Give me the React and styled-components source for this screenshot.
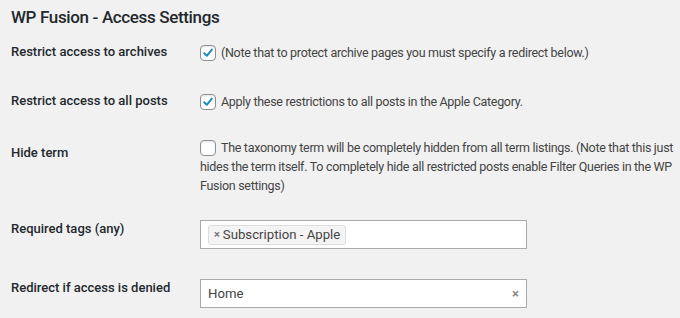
import React from "react";
import styled, { createGlobalStyle } from "styled-components";

const GlobalStyle = createGlobalStyle`
  body {
    margin: 0;
    background: #f1f1f1;
    font-family: Roboto, "Liberation Sans", Arial, sans-serif;
    color: #23282d;
  }
`;

const Page = styled.div`
  width: 680px;
  height: 318px;
  overflow: hidden;
  padding-left: 11px;
  box-sizing: border-box;
`;

const Title = styled.h2`
  margin: 0;
  height: 30px;
  padding-top: 7px;
  box-sizing: border-box;
  font-size: 17px;
  line-height: 20px;
  font-weight: 500;
  letter-spacing: -0.35px;
  color: #23282d;
`;

const Row = styled.div`
  display: grid;
  grid-template-columns: 189px 1fr;
  align-items: start;
  padding-top: ${(p) => p.$top}px;
  height: ${(p) => p.$h}px;
  box-sizing: border-box;
`;

const Label = styled.div`
  font-size: 13px;
  line-height: 18px;
  font-weight: 500;
  color: #23282d;
  margin-top: ${(p) => p.$offset || 0}px;
`;

const CheckLine = styled.label`
  display: block;
  padding-right: 6px;
  font-size: 12.5px;
  letter-spacing: -0.3px;
  line-height: 19px;
  color: #444;
`;

const Box = styled.span`
  display: inline-block;
  vertical-align: -4px;
  width: 16px;
  height: 16px;
  box-sizing: border-box;
  margin-right: 5px;
  border: 1px solid #8c8f94;
  border-radius: 4px;
  background: #fff;
  box-shadow: inset 0 1px 2px rgba(0, 0, 0, 0.1);
  position: relative;

  svg {
    position: absolute;
    left: 1px;
    top: 1px;
  }
`;

const Field = styled.div`
  width: 327px;
  height: 29px;
  box-sizing: border-box;
  border: 1px solid #aaa;
  background: #fff;
  display: flex;
  align-items: center;
  padding: 0 7px;
  font-size: 13.2px;
  color: #444;
`;

const Chip = styled.span`
  display: inline-flex;
  align-items: center;
  height: 20px;
  box-sizing: border-box;
  padding: 0 5px;
  background: #f4f4f4;
  border: 1px solid #ddd;
  border-radius: 3px;
  font-size: 13.2px;
  color: #444;
`;

const Remove = styled.span`
  font-size: 11px;
  color: #777;
  margin-right: 3px;
  font-weight: 700;
`;

const Value = styled.span`
  flex: 1;
`;

const Clear = styled.span`
  font-size: 13px;
  font-weight: 700;
  color: #888;
`;

function Checkbox({ checked, children }) {
  return (
    <CheckLine>
      <Box>
        {checked && (
          <svg width="12" height="12" viewBox="0 0 12 12">
            <path
              d="M2.2 6.2 L4.8 8.8 L9.8 2.6"
              fill="none"
              stroke="#1e8cbe"
              strokeWidth="2"
              strokeLinecap="round"
              strokeLinejoin="round"
            />
          </svg>
        )}
      </Box>
      {children}
    </CheckLine>
  );
}

export default function App() {
  return (
    <Page>
      <GlobalStyle />
      <Title>WP Fusion - Access Settings</Title>
      <Row $top={13} $h={49}>
        <Label>Restrict access to archives</Label>
        <Checkbox checked>
          (Note that to protect archive pages you must specify a redirect below.)
        </Checkbox>
      </Row>
      <Row $top={13} $h={49}>
        <Label>Restrict access to all posts</Label>
        <Checkbox checked>
          Apply these restrictions to all posts in the Apple Category.
        </Checkbox>
      </Row>
      <Row $top={10} $h={77}>
        <Label $offset={6}>Hide term</Label>
        <Checkbox>
          The taxonomy term will be completely hidden from all term listings.
          (Note that this just hides the term itself. To completely hide all
          restricted posts enable Filter Queries in the WP Fusion settings)
        </Checkbox>
      </Row>
      <Row $top={15} $h={59}>
        <Label>Required tags (any)</Label>
        <Field>
          <Chip>
            <Remove>×</Remove>Subscription - Apple
          </Chip>
        </Field>
      </Row>
      <Row $top={15} $h={54}>
        <Label>Redirect if access is denied</Label>
        <Field>
          <Value>Home</Value>
          <Clear>×</Clear>
        </Field>
      </Row>
    </Page>
  );
}
